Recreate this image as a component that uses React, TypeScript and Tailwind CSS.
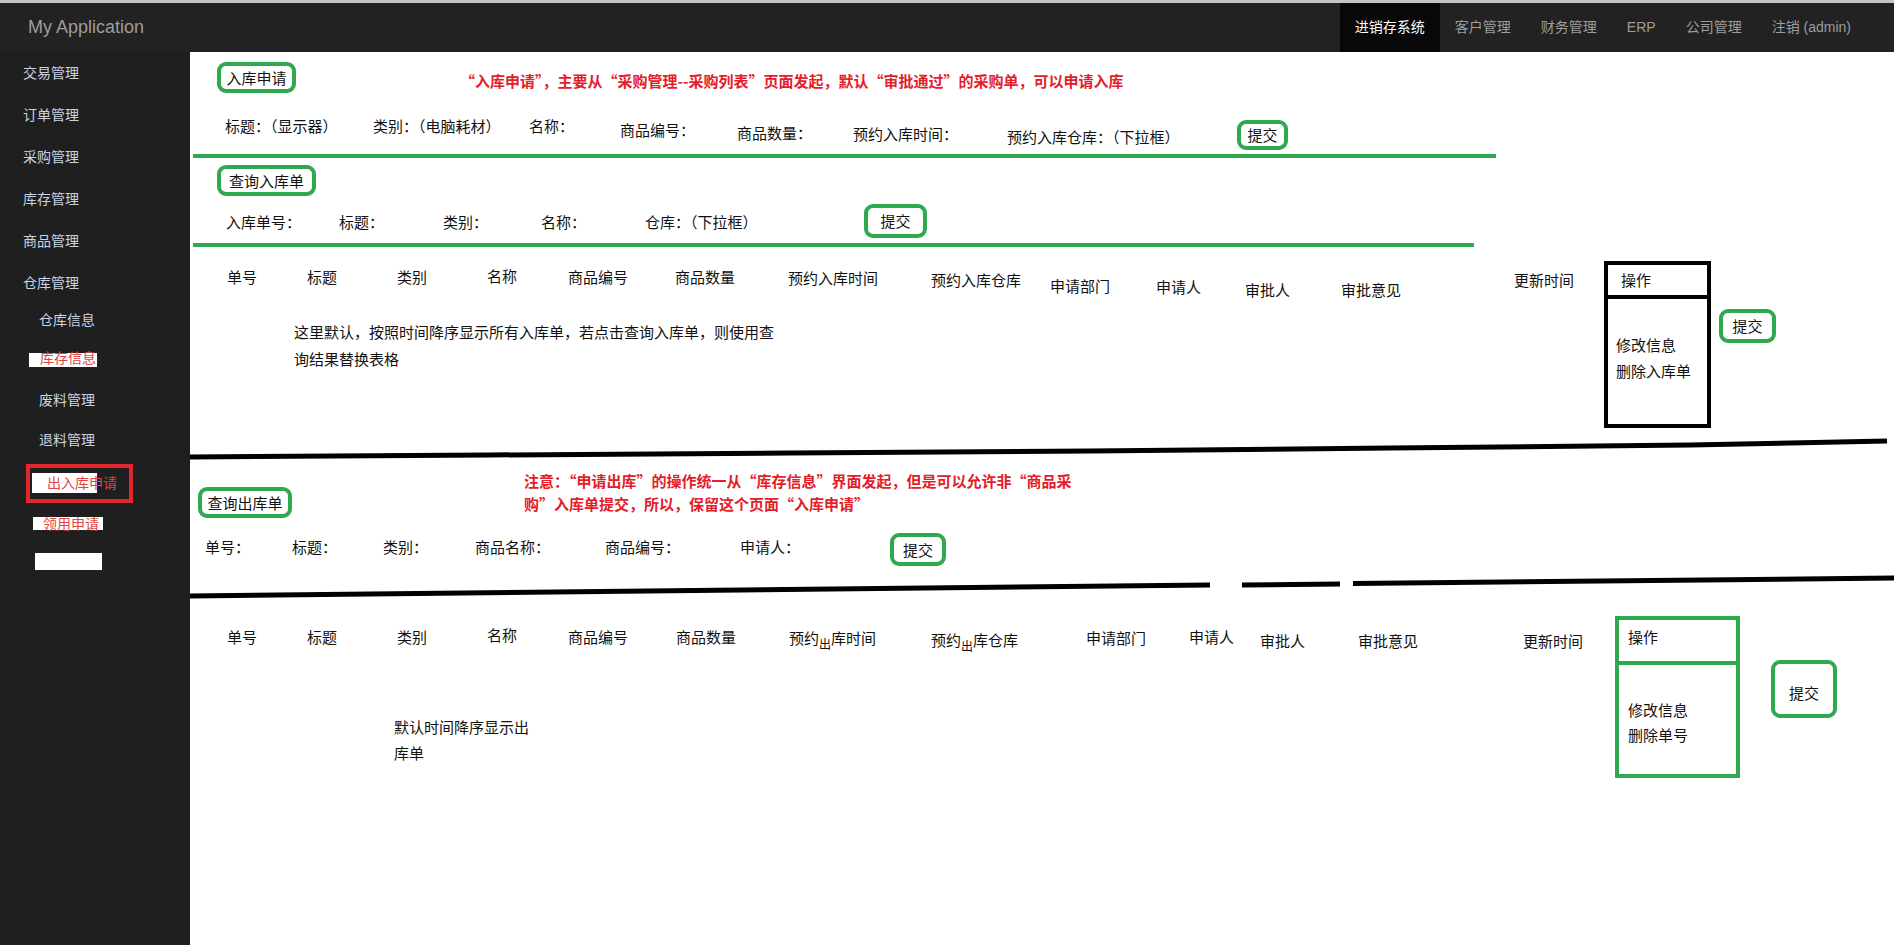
import React from 'react'

type Cell = { label: React.ReactNode; cls: string }

const navItems = ['客户管理', '财务管理', 'ERP', '公司管理', '注销 (admin)']
const sideItems = ['交易管理', '订单管理', '采购管理', '库存管理', '商品管理', '仓库管理']

const applyFields: Cell[] = [
  { label: '标题：（显示器）', cls: 'w-[148px]' },
  { label: '类别：（电脑耗材）', cls: 'w-[156px]' },
  { label: '名称：', cls: 'w-[91px]' },
  { label: '商品编号：', cls: 'w-[117px] mt-[4px]' },
  { label: '商品数量：', cls: 'w-[116px] mt-[7px]' },
  { label: '预约入库时间：', cls: 'w-[154px] mt-[8px]' },
  { label: '预约入库仓库：（下拉框）', cls: 'w-[230px] mt-[11px]' },
]

const queryInFields: Cell[] = [
  { label: '入库单号：', cls: 'w-[113px]' },
  { label: '标题：', cls: 'w-[104px]' },
  { label: '类别：', cls: 'w-[98px]' },
  { label: '名称：', cls: 'w-[104px]' },
  { label: '仓库：（下拉框）', cls: 'w-[219px]' },
]

const inHeaders: Cell[] = [
  { label: '单号', cls: 'w-[80px] mt-[20px]' },
  { label: '标题', cls: 'w-[90px] mt-[20px]' },
  { label: '类别', cls: 'w-[90px] mt-[20px]' },
  { label: '名称', cls: 'w-[81px] mt-[19px]' },
  { label: '商品编号', cls: 'w-[107px] mt-[20px]' },
  { label: '商品数量', cls: 'w-[113px] mt-[20px]' },
  { label: '预约入库时间', cls: 'w-[143px] mt-[21px]' },
  { label: '预约入库仓库', cls: 'w-[119px] mt-[23px]' },
  { label: '申请部门', cls: 'w-[106px] mt-[29px]' },
  { label: '申请人', cls: 'w-[89px] mt-[30px]' },
  { label: '审批人', cls: 'w-[96px] mt-[33px]' },
  { label: '审批意见', cls: 'w-[173px] mt-[33px]' },
  { label: '更新时间', cls: 'w-[90px] mt-[23px]' },
]

const queryOutFields: Cell[] = [
  { label: '单号：', cls: 'w-[87px]' },
  { label: '标题：', cls: 'w-[91px]' },
  { label: '类别：', cls: 'w-[92px]' },
  { label: '商品名称：', cls: 'w-[130px]' },
  { label: '商品编号：', cls: 'w-[135px]' },
  { label: '申请人：', cls: 'w-[150px]' },
]

const outHeaders: Cell[] = [
  { label: '单号', cls: 'w-[80px] mt-[25px]' },
  { label: '标题', cls: 'w-[90px] mt-[25px]' },
  { label: '类别', cls: 'w-[90px] mt-[25px]' },
  { label: '名称', cls: 'w-[81px] mt-[23px]' },
  { label: '商品编号', cls: 'w-[108px] mt-[25px]' },
  { label: '商品数量', cls: 'w-[113px] mt-[25px]' },
  {
    label: (
      <>
        预约<span className="align-[-5px] text-[12px]">出</span>库时间
      </>
    ),
    cls: 'w-[142px] mt-[26px]',
  },
  {
    label: (
      <>
        预约<span className="align-[-5px] text-[12px]">出</span>库仓库
      </>
    ),
    cls: 'w-[155px] mt-[28px]',
  },
  { label: '申请部门', cls: 'w-[103px] mt-[26px]' },
  { label: '申请人', cls: 'w-[71px] mt-[25px]' },
  { label: '审批人', cls: 'w-[98px] mt-[29px]' },
  { label: '审批意见', cls: 'w-[165px] mt-[29px]' },
  { label: '更新时间', cls: 'w-[92px] mt-[29px]' },
]

const GreenButton = ({ label, className }: { label: string; className: string }) => (
  <div
    className={`flex shrink-0 items-center justify-center rounded-[9px] border-[4px] border-[#2fa84f] bg-white ${className}`}
  >
    {label}
  </div>
)

const Row = ({ cells }: { cells: Cell[] }) => (
  <>
    {cells.map((c, i) => (
      <div key={i} className={`shrink-0 whitespace-nowrap ${c.cls}`}>
        {c.label}
      </div>
    ))}
  </>
)

const Sidebar = () => (
  <aside className="w-[190px] shrink-0 bg-[#1f1f1f] text-[14px] text-[#c9d4e2]">
    {sideItems.map((s) => (
      <div key={s} className="h-[42px] pl-[23px] leading-[42px]">
        {s}
      </div>
    ))}
    <div className="h-[32px] pl-[39px] leading-[32px]">仓库信息</div>
    <div className="relative h-[44px]">
      <div className="absolute left-[29px] top-[17px] h-[14px] w-[68px] bg-white" />
      <div className="relative pl-[40px] leading-[44px] text-[#e04444]">库存信息</div>
    </div>
    <div className="h-[40px] pl-[39px] leading-[40px]">废料管理</div>
    <div className="h-[40px] pl-[39px] leading-[40px]">退料管理</div>
    <div className="relative ml-[26px] mt-[4px] h-[39px] w-[107px] border-[4px] border-[#e3262b]">
      <div className="absolute left-[2px] top-[5px] h-[20px] w-[65px] bg-white" />
      <div className="relative pl-[17px] leading-[31px] text-[#e04444]">出入库申请</div>
    </div>
    <div className="relative h-[42px]">
      <div className="absolute left-[33px] top-[14px] h-[13px] w-[70px] bg-white" />
      <div className="relative pl-[43px] leading-[42px] text-[#e04444]">领用申请</div>
    </div>
    <div className="ml-[35px] mt-[8px] h-[17px] w-[67px] bg-white" />
  </aside>
)

export default function App() {
  return (
    <div className="flex min-h-screen w-full flex-col bg-white font-['Liberation_Sans','Noto_Sans_CJK_SC',sans-serif]">
      <header className="flex h-[52px] shrink-0 items-stretch border-t-[3px] border-[#c4c4c4] bg-[#222]">
        <div className="flex items-center pl-[28px] text-[18px] text-[#9d9d9d]">My Application</div>
        <nav className="ml-auto mr-[28px] flex items-stretch text-[14px] text-[#9d9d9d]">
          <div className="flex items-center bg-[#080808] px-[15px] text-white">进销存系统</div>
          {navItems.map((n) => (
            <div key={n} className="flex items-center px-[15px]">
              {n}
            </div>
          ))}
        </nav>
      </header>

      <div className="flex flex-1">
        <Sidebar />

        <main className="flex min-w-0 flex-1 flex-col font-['Noto_Sans_CJK_SC',sans-serif] text-[15px] leading-[20px] text-[#111]">
          {/* 入库申请 */}
          <div className="mt-[10px] flex items-center">
            <GreenButton label="入库申请" className="ml-[27px] h-[31px] w-[79px]" />
            <p className="ml-[164px] mt-[6px] font-bold text-[#e3202a]">
              “入库申请”，主要从“采购管理--采购列表”页面发起，默认“审批通过”的采购单，可以申请入库
            </p>
          </div>
          <div className="mt-[23px] flex items-start pl-[35px]">
            <Row cells={applyFields} />
            <GreenButton label="提交" className="mt-[4px] h-[30px] w-[51px]" />
          </div>
          <div className="ml-[3px] mt-[4px] h-[4px] w-[1303px] bg-[#2fa84f]" />

          {/* 查询入库单 */}
          <GreenButton label="查询入库单" className="ml-[27px] mt-[7px] h-[31px] w-[99px]" />
          <div className="mt-[8px] flex items-start pl-[36px]">
            <div className="mt-[8px] flex">
              <Row cells={queryInFields} />
            </div>
            <GreenButton label="提交" className="h-[34px] w-[63px]" />
          </div>
          <div className="ml-[3px] mt-[5px] h-[4px] w-[1281px] bg-[#2fa84f]" />

          {/* 入库单列表 */}
          <div className="flex items-start">
            <div className="w-[1414px] shrink-0 pl-[37px]">
              <div className="flex items-start">
                <Row cells={inHeaders} />
              </div>
              <p className="mt-[18px] pl-[67px] leading-[27px]">
                这里默认，按照时间降序显示所有入库单，若点击查询入库单，则使用查
                <br />
                询结果替换表格
              </p>
            </div>
            <div className="mt-[14px] flex h-[167px] w-[107px] shrink-0 flex-col border-[4px] border-black">
              <div className="flex h-[34px] items-center border-b-[4px] border-black pl-[13px]">操作</div>
              <div className="pl-[8px] pt-[33px] leading-[26px]">
                修改信息
                <br />
                删除入库单
              </div>
            </div>
            <GreenButton label="提交" className="ml-[8px] mt-[62px] h-[34px] w-[57px]" />
          </div>

          <svg className="mt-[8px] block h-[26px] w-full" viewBox="0 0 1704 26" preserveAspectRatio="none">
            <polyline
              points="0,21 300,19 600,17 900,15 1200,12 1500,9 1697,5"
              fill="none"
              stroke="#000"
              strokeWidth="5"
            />
          </svg>

          {/* 查询出库单 */}
          <div className="flex items-start">
            <GreenButton label="查询出库单" className="ml-[8px] mt-[25px] h-[31px] w-[94px]" />
            <p className="ml-[232px] mt-[7px] font-bold leading-[23px] text-[#e3202a]">
              注意：“申请出库”的操作统一从“库存信息”界面发起，但是可以允许非“商品采
              <br />
              购”入库单提交，所以，保留这个页面“入库申请”
            </p>
          </div>
          <div className="mt-[15px] flex items-start pl-[15px]">
            <div className="mt-[4px] flex">
              <Row cells={queryOutFields} />
            </div>
            <GreenButton label="提交" className="h-[33px] w-[56px]" />
          </div>

          <svg className="mt-[4px] block h-[32px] w-full" viewBox="0 0 1704 32" preserveAspectRatio="none">
            <g fill="none" stroke="#000" strokeWidth="5">
              <line x1="0" y1="26" x2="1020" y2="15" />
              <line x1="1052" y1="15" x2="1150" y2="14" />
              <line x1="1163" y1="13.5" x2="1704" y2="8" />
            </g>
          </svg>

          {/* 出库单列表 */}
          <div className="flex items-start">
            <div className="w-[1425px] shrink-0 pl-[37px]">
              <div className="flex items-start">
                <Row cells={outHeaders} />
              </div>
              <p className="mt-[58px] pl-[167px] leading-[26px]">
                默认时间降序显示出
                <br />
                库单
              </p>
            </div>
            <div className="mt-[14px] flex h-[162px] w-[125px] shrink-0 flex-col border-[4px] border-[#2fa84f]">
              <div className="h-[45px] border-b-[4px] border-[#2fa84f] pl-[9px] pt-[7px]">操作</div>
              <div className="pl-[9px] pt-[32px] leading-[25px]">
                修改信息
                <br />
                删除单号
              </div>
            </div>
            <GreenButton label="提交" className="ml-[31px] mt-[58px] h-[58px] w-[66px] pt-[8px]" />
          </div>
        </main>
      </div>
    </div>
  )
}
